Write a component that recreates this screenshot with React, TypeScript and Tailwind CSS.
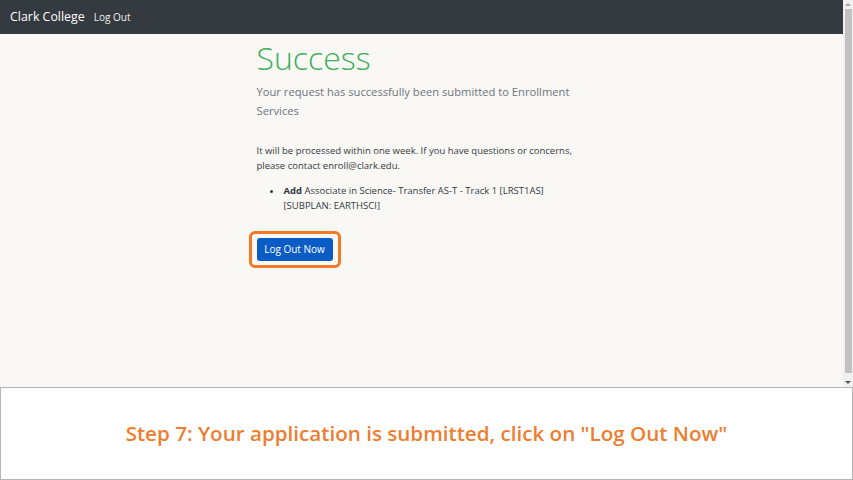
export default function App() {
  return (
    <div className="flex h-[480px] w-[853px] flex-col overflow-hidden bg-white" style={{ fontFamily: '"Open Sans", "Noto Sans", sans-serif' }}>
      <div className="flex h-[387px] w-full">
        <div className="flex flex-1 flex-col bg-[#f9f8f5]">
          <nav className="flex h-[34px] items-center bg-[#343a40] pl-[10px]">
            <span className="text-[12.4px] text-white">Clark College</span>
            <span className="ml-[9px] text-[10px] text-[#f0f0f0]">Log Out</span>
          </nav>
          <div className="mx-auto w-[330px] pt-[4px]">
            <h1 className="text-[32px] font-light leading-[40px] text-[#3fae5a]">Success</h1>
            <p className="mt-[4px] text-[11.2px] leading-[19px] text-[#6c757d]">
              Your request has successfully been submitted to Enrollment Services
            </p>
            <p className="mt-[23px] text-[9.5px] leading-[15px] text-[#343a40]">
              It will be processed within one week. If you have questions or concerns, please contact enroll@clark.edu.
            </p>
            <ul className="mt-[10px] list-disc pl-[26px] text-[9.5px] leading-[15px] text-[#343a40]">
              <li className="pl-[1px]">
                <b className="font-bold">Add</b> Associate in Science- Transfer AS-T - Track 1 [LRST1AS] [SUBPLAN: EARTHSCI]
              </li>
            </ul>
            <div className="mt-[18px] ml-[-8px] inline-block rounded-[6px] border-[3px] border-[#f07a28] px-[5px] py-[4px]">
              <button className="block h-[23px] w-[76px] rounded-[3px] bg-[#0a5cc4] text-center text-[10px] leading-[23px] text-white">
                Log Out Now
              </button>
            </div>
          </div>
        </div>
        <div className="flex w-[10px] flex-col items-center bg-[#f0f0f0]">
          <div className="mt-[3px] h-0 w-0 border-x-[3px] border-b-[3px] border-x-transparent border-b-[#a3a3a3]" />
          <div className="mt-[3px] w-[7px] flex-1 bg-[#c1c1c1]" />
          <div className="mb-[3px] mt-[8px] h-0 w-0 border-x-[3px] border-t-[3px] border-x-transparent border-t-[#505050]" />
        </div>
      </div>
      <div className="flex flex-1 items-center justify-center border border-[#b4b4b4] bg-white">
        <span className="text-[20.6px] font-semibold text-[#ef7d2f]">Step 7: Your application is submitted, click on "Log Out Now"</span>
      </div>
    </div>
  );
}
